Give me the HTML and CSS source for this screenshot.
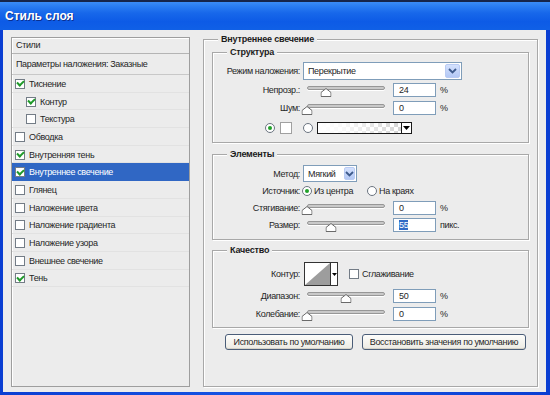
FILE: index.html
```html
<!DOCTYPE html>
<html lang="ru">
<head>
  <meta charset="UTF-8" />
  <meta name="viewport" content="width=device-width, initial-scale=1.0"/>
  <title>Стиль слоя</title>
  <link rel="stylesheet" href="styles.css">
</head>
<body>
  <div class="window">
    <div class="titlebar">Стиль слоя</div>

    <div class="dialog">
      <div class="styles-list">
        <div class="list-head">Стили</div>
        <div class="list-blend">Параметры наложения: Заказные</div>
        <div class="list-row"><span class="check on"></span>Тиснение</div>
        <div class="list-row sub"><span class="check on"></span>Контур</div>
        <div class="list-row sub"><span class="check"></span>Текстура</div>
        <div class="list-row"><span class="check"></span>Обводка</div>
        <div class="list-row"><span class="check on"></span>Внутренняя тень</div>
        <div class="list-row active"><span class="check on"></span>Внутреннее свечение</div>
        <div class="list-row"><span class="check"></span>Глянец</div>
        <div class="list-row"><span class="check"></span>Наложение цвета</div>
        <div class="list-row"><span class="check"></span>Наложение градиента</div>
        <div class="list-row"><span class="check"></span>Наложение узора</div>
        <div class="list-row"><span class="check"></span>Внешнее свечение</div>
        <div class="list-row"><span class="check on"></span>Тень</div>
      </div>

      <div class="panel">
        <div class="title">Внутреннее свечение</div>

        <!-- Структура -->
        <div class="group group-structure">
          <div class="title">Структура</div>
          <div class="row row-combo">
            <label>Режим наложения:</label>
            <div class="combo combo-wide">
              <span>Перекрытие</span>
              <span class="drop"><svg width="9" height="6" viewBox="0 0 9 6"><path d="M1 1 L4.5 4.5 L8 1" fill="none" stroke="#3d5a8c" stroke-width="1.8"/></svg></span>
            </div>
          </div>
          <div class="row">
            <label>Непрозр.:</label>
            <div class="slider">
              <div class="track"></div>
              <svg class="thumb" style="left: 24%" width="11" height="9" viewBox="0 0 11 9"><path d="M0.5 8.5 V4.5 L5.5 0.5 L10.5 4.5 V8.5 Z" fill="#fff" stroke="#6a6a6a"/></svg>
            </div>
            <div class="field">24</div>
            <span class="unit">%</span>
          </div>
          <div class="row">
            <label>Шум:</label>
            <div class="slider">
              <div class="track"></div>
              <svg class="thumb" style="left: 0%" width="11" height="9" viewBox="0 0 11 9"><path d="M0.5 8.5 V4.5 L5.5 0.5 L10.5 4.5 V8.5 Z" fill="#fff" stroke="#6a6a6a"/></svg>
            </div>
            <div class="field">0</div>
            <span class="unit">%</span>
          </div>
          <div class="row row-colors">
            <span class="radio on"></span>
            <span class="swatch"></span>
            <span class="radio radio-gap"></span>
            <span class="gradient"></span>
            <span class="gradient-drop"><svg width="7" height="4" viewBox="0 0 7 4"><path d="M0 0 H7 L3.5 4 Z" fill="#000"/></svg></span>
          </div>
        </div>

        <!-- Элементы -->
        <div class="group group-elements">
          <div class="title">Элементы</div>
          <div class="row row-combo small">
            <label>Метод:</label>
            <div class="combo combo-small">
              <span>Мягкий</span>
              <span class="drop"><svg width="9" height="6" viewBox="0 0 9 6"><path d="M1 1 L4.5 4.5 L8 1" fill="none" stroke="#3d5a8c" stroke-width="1.8"/></svg></span>
            </div>
          </div>
          <div class="row tight">
            <label>Источник:</label>
            <span class="option first"><span class="radio on"></span>Из центра</span>
            <span class="option"><span class="radio"></span>На краях</span>
          </div>
          <div class="row tight">
            <label>Стягивание:</label>
            <div class="slider">
              <div class="track"></div>
              <svg class="thumb" style="left: 0%" width="11" height="9" viewBox="0 0 11 9"><path d="M0.5 8.5 V4.5 L5.5 0.5 L10.5 4.5 V8.5 Z" fill="#fff" stroke="#6a6a6a"/></svg>
            </div>
            <div class="field">0</div>
            <span class="unit">%</span>
          </div>
          <div class="row tight">
            <label>Размер:</label>
            <div class="slider">
              <div class="track"></div>
              <svg class="thumb" style="left: 31%" width="11" height="9" viewBox="0 0 11 9"><path d="M0.5 8.5 V4.5 L5.5 0.5 L10.5 4.5 V8.5 Z" fill="#fff" stroke="#6a6a6a"/></svg>
            </div>
            <div class="field"><span class="selected">55</span></div>
            <span class="unit">пикс.</span>
          </div>
        </div>

        <!-- Качество -->
        <div class="group group-quality">
          <div class="title">Качество</div>
          <div class="row row-contour">
            <label>Контур:</label>
            <div class="contour">
              <svg width="25" height="22" viewBox="0 0 25 22"><rect width="25" height="22" fill="#fff"/><path d="M0 22 L25 0 V22 Z" fill="#9d9d9d"/></svg>
              <span class="contour-drop"><svg width="5" height="3" viewBox="0 0 5 3"><path d="M0 0 H5 L2.5 3 Z" fill="#000"/></svg></span>
            </div>
            <span class="check smooth"></span>
            <span class="check-label">Сглаживание</span>
          </div>
          <div class="row">
            <label>Диапазон:</label>
            <div class="slider">
              <div class="track"></div>
              <svg class="thumb" style="left: 50%" width="11" height="9" viewBox="0 0 11 9"><path d="M0.5 8.5 V4.5 L5.5 0.5 L10.5 4.5 V8.5 Z" fill="#fff" stroke="#6a6a6a"/></svg>
            </div>
            <div class="field">50</div>
            <span class="unit">%</span>
          </div>
          <div class="row">
            <label>Колебание:</label>
            <div class="slider">
              <div class="track"></div>
              <svg class="thumb" style="left: 0%" width="11" height="9" viewBox="0 0 11 9"><path d="M0.5 8.5 V4.5 L5.5 0.5 L10.5 4.5 V8.5 Z" fill="#fff" stroke="#6a6a6a"/></svg>
            </div>
            <div class="field">0</div>
            <span class="unit">%</span>
          </div>
        </div>

        <div class="buttons">
          <button class="btn btn-default">Использовать по умолчанию</button>
          <button class="btn btn-restore">Восстановить значения по умолчанию</button>
        </div>
      </div>
    </div>
  </div>
</body>
</html>
```

FILE: styles.css
```css
* {
  box-sizing: border-box;
}

body {
  margin: 0;
  font-family: "Liberation Sans", Arial, sans-serif;
  font-size: 9px;
  letter-spacing: -0.35px;
  color: #262626;
}

.window {
  width: 550px;
  height: 395px;
  display: flex;
  flex-direction: column;
  background: linear-gradient(90deg, #0a3ed2, #1657e6 50%, #0a3ed2);
  border-top: 2px solid #16254a;
  overflow: hidden;
}

.titlebar {
  height: 28px;
  padding: 7px 0 0 5px;
  color: #fff;
  font-size: 12px;
  font-weight: bold;
  letter-spacing: 0;
  text-shadow: 1px 1px 0 #0b2f8f;
  background: linear-gradient(#3b8cf6 0%, #2a7df2 15%, #1767ea 40%, #0d5be6 70%, #1060e6 100%);
}

.dialog {
  flex: 1;
  display: flex;
  gap: 13px;
  margin: 0 4px 3px 3px;
  padding: 7px 8px 5px 8px;
  background: #ececec;
}

/* left list of styles */
.styles-list {
  width: 179px;
  border: 1px solid #9e9e9e;
  box-shadow: inset 1px 1px 0 #fff;
}

.list-head {
  height: 16px;
  padding: 2px 0 0 4px;
  border-bottom: 1px solid #b4b4b4;
}

.list-blend {
  height: 21px;
  padding: 5px 0 0 4px;
  border-bottom: 1px solid #c8c8c8;
}

.list-row {
  height: 17.7px;
  display: flex;
  align-items: center;
  padding-left: 3px;
  box-shadow: inset 0 -1px 0 #e2e2e2;
}

.list-row.sub {
  padding-left: 14px;
}

.list-row.active {
  background: #3067c4;
  color: #fff;
  box-shadow: none;
}

.check {
  width: 10px;
  height: 10px;
  margin-right: 4px;
  display: flex;
  align-items: center;
  justify-content: center;
  border: 1px solid #737c86;
  background: #fff;
  flex-shrink: 0;
}

.check.on::after {
  content: "";
  width: 3px;
  height: 5px;
  margin-top: -2px;
  border: solid #1f9a2a;
  border-width: 0 2px 2px 0;
  transform: rotate(45deg);
}

/* right panel */
.panel {
  flex: 1;
  margin-top: 2px;
  padding: 0 8px;
  border: 1px solid #a8a8a8;
  box-shadow: inset 1px 1px 0 #fff, 1px 1px 0 #fff;
}

.title {
  display: table;
  margin: -7px 0 0 6px;
  padding: 0 3px;
  line-height: 12px;
  font-weight: bold;
  letter-spacing: -0.2px;
  color: #1b1b1b;
  background: #ececec;
}

.group {
  margin-top: 7px;
  padding-bottom: 6px;
  border: 1px solid #a8a8a8;
  box-shadow: inset 1px 1px 0 #fff, 1px 1px 0 #fff;
}

.group .title {
  margin-left: 14px;
}

.group-elements {
  margin-top: 11px;
}

.group-quality {
  margin-top: 10px;
  padding-bottom: 5px;
}

.row {
  height: 16px;
  margin-top: 2px;
  display: flex;
  align-items: center;
}

.row.tight {
  margin-top: 1px;
}

.row label {
  width: 87px;
  flex-shrink: 0;
  text-align: right;
}

.row-combo {
  height: 18px;
  margin-top: 4px;
}

.row-combo.small {
  height: 17px;
  margin-top: 5px;
}

.row-colors {
  margin-top: 4px;
  padding-left: 52px;
}

.row-contour {
  height: 24px;
  margin-top: 6px;
}

/* combo boxes */
.combo {
  height: 100%;
  margin-left: 3px;
  display: flex;
  align-items: center;
  justify-content: space-between;
  padding: 1px 1px 1px 4px;
  border: 1px solid #7f9db9;
  background: #fff;
}

.combo-wide {
  width: 159px;
}

.combo-small {
  width: 54px;
}

.combo .drop {
  width: 15px;
  height: 100%;
  display: flex;
  align-items: center;
  justify-content: center;
  border: 1px solid #b9cbf3;
  border-radius: 2px;
  background: linear-gradient(#d4e1fd, #b3c8f5);
}

.combo-small .drop {
  width: 11px;
}

/* sliders */
.slider {
  position: relative;
  width: 78px;
  height: 16px;
  margin-left: 7px;
}

.track {
  height: 4px;
  margin-top: 4px;
  border: 1px solid #979797;
  border-radius: 2px;
  background: #c9c9c9;
  box-shadow: 0 1px 0 #fff;
}

.thumb {
  position: absolute;
  top: 6px;
  transform: translateX(-50%);
}

.field {
  width: 43px;
  height: 14px;
  margin-left: 8px;
  padding: 1px 0 0 5px;
  line-height: 11px;
  border: 1px solid #7f9db9;
  background: #fff;
}

.field .selected {
  background: #316ac5;
  color: #fff;
}

.unit {
  margin-left: 4px;
}

/* radios */
.radio {
  width: 10px;
  height: 10px;
  display: inline-flex;
  align-items: center;
  justify-content: center;
  border: 1px solid #6b7480;
  border-radius: 50%;
  background: #fff;
  flex-shrink: 0;
}

.radio.on::after {
  content: "";
  width: 4px;
  height: 4px;
  border-radius: 50%;
  background: #22a12a;
}

.option {
  display: flex;
  align-items: center;
  gap: 2px;
}

.option.first {
  width: 65px;
  margin-left: 2px;
}

.swatch {
  width: 12px;
  height: 12px;
  margin-left: 5px;
  border: 1px solid #a0a0a0;
  background: #fff;
}

.radio-gap {
  margin-left: 11px;
}

.gradient {
  width: 85px;
  height: 12px;
  margin-left: 4px;
  border: 1px solid #1a1a1a;
  background:
    linear-gradient(90deg, #fff 0%, rgba(255, 255, 255, 0.85) 30%, rgba(255, 255, 255, 0) 100%),
    repeating-conic-gradient(#d4d4d4 0 25%, #fff 0 50%) 0 0 / 8px 8px;
}

.gradient-drop {
  width: 10px;
  height: 12px;
  display: flex;
  align-items: center;
  justify-content: center;
  border: 1px solid #1a1a1a;
  border-left: none;
  background: #fff;
}

/* contour picker */
.contour {
  height: 24px;
  margin-left: 4px;
  display: flex;
  border: 1px solid #333;
  background: #fff;
}

.contour-drop {
  width: 7px;
  display: flex;
  align-items: center;
  justify-content: center;
  border-left: 1px solid #333;
}

.check.smooth {
  margin: 0 0 0 11px;
}

.check-label {
  margin-left: 3px;
}

/* buttons */
.buttons {
  display: flex;
  gap: 9px;
  margin-top: 6px;
  padding-left: 13px;
}

.btn {
  height: 16px;
  padding: 0;
  font-family: "Liberation Sans", Arial, sans-serif;
  font-size: 9px;
  letter-spacing: -0.35px;
  color: #262626;
  border: 1px solid #4a5d78;
  border-radius: 3px;
  background: linear-gradient(#fdfdfb, #eceae3);
  box-shadow: inset 0 -1px 0 #d6d3c8;
}

.btn-default {
  width: 128px;
}

.btn-restore {
  width: 164px;
}
```
